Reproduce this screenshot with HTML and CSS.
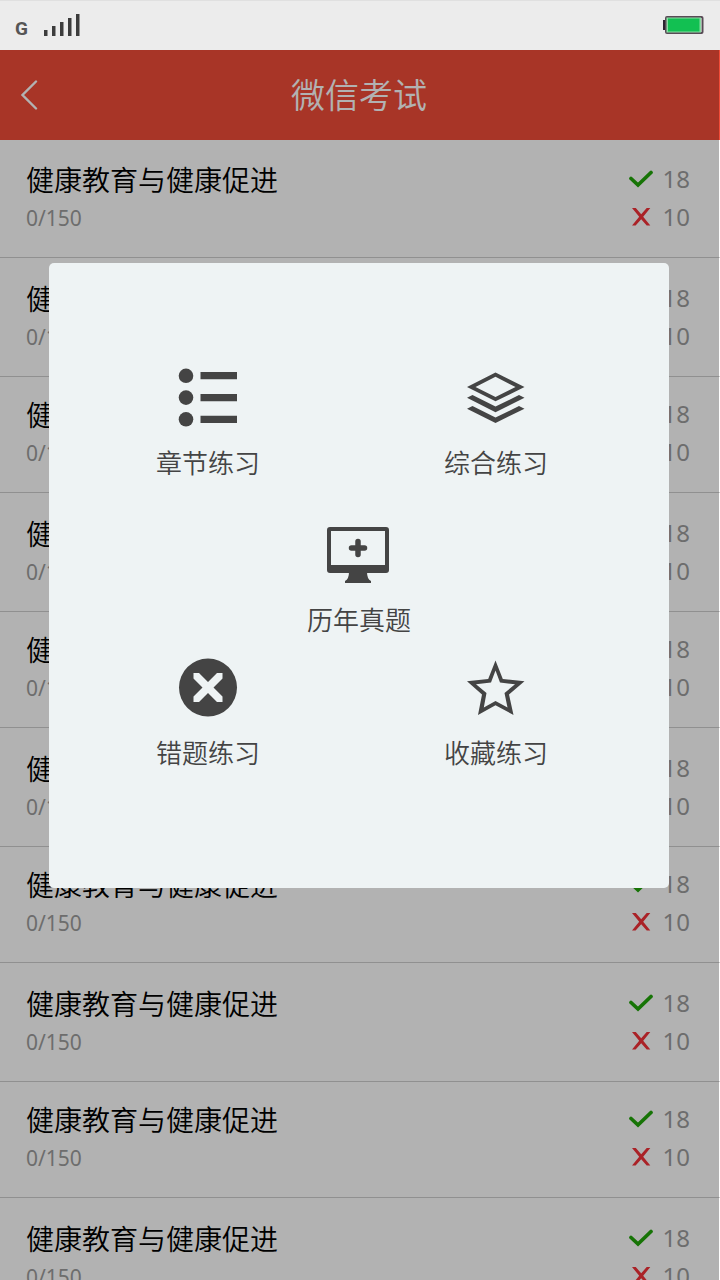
FILE: index.html
```html
<!DOCTYPE html>
<html lang="zh-CN">
<head>
<meta charset="utf-8">
<meta name="viewport" content="width=device-width, initial-scale=1">
<title>微信考试</title>
<link rel="stylesheet" href="styles.css">
</head>
<body>
<svg class="sprite" aria-hidden="true">
  <symbol id="check" viewBox="0 0 24 18"><path d="M2 8.500 9 15 22 2.500" fill="none" stroke="#21a60a" stroke-width="3.700" stroke-linecap="round" stroke-linejoin="miter"/></symbol>
  <symbol id="cross" viewBox="0 0 24 18"><path d="M3 0H6.800L12.200 6.300 17.700 0H21.300L14.200 8.800 21.300 17.500H17.700L12.200 11.200 6.600 17.500H3L10.200 8.800Z" fill="#f43138"/></symbol>
</svg>
<div class="app">
  <div class="status">
    <div class="network">
      <span class="carrier">G</span>
      <svg width="38" height="24" viewBox="0 0 38 24" aria-hidden="true"><path d="M1 17h3.500v6H1zM9 13h3.500v10H9zM17 9h3.500v14H17zM25 5h3.500v18H25zM33 1h3.500v22H33z" fill="#3c3c3c"/></svg>
    </div>
    <svg width="42" height="20" viewBox="0 0 42 20" aria-hidden="true"><path d="M0 5h3v10H0z" fill="#2c2430"/><rect x="2" y="1" width="38.500" height="18" rx="2" fill="#584a55"/><rect x="3.500" y="2.500" width="34.500" height="15" fill="#8bdca5"/><rect x="5" y="3.500" width="31.500" height="13" fill="#12c052"/><path d="M38.500 3v14" stroke="#aaa" stroke-width="1"/></svg>
  </div>
  <header class="bar">
    <button class="back" type="button" aria-label="返回"><svg width="18" height="30" viewBox="0 0 18 30"><path d="M16 1.500 2.500 15 16 28.500" fill="none" stroke="#fff" stroke-width="2.400" stroke-linecap="round"/></svg></button>
    <h1 class="heading">微信考试</h1>
  </header>
  <ul class="list">
    <li class="row"><div><h2 class="name">健康教育与健康促进</h2><p class="progress">0/150</p></div><div class="score"><p class="count"><svg class="mark"><use href="#check"/></svg>18</p><p class="count"><svg class="mark"><use href="#cross"/></svg>10</p></div></li>
    <li class="row"><div><h2 class="name">健康教育与健康促进</h2><p class="progress">0/150</p></div><div class="score"><p class="count"><svg class="mark"><use href="#check"/></svg>18</p><p class="count"><svg class="mark"><use href="#cross"/></svg>10</p></div></li>
    <li class="row"><div><h2 class="name">健康教育与健康促进</h2><p class="progress">0/150</p></div><div class="score"><p class="count"><svg class="mark"><use href="#check"/></svg>18</p><p class="count"><svg class="mark"><use href="#cross"/></svg>10</p></div></li>
    <li class="row"><div><h2 class="name">健康教育与健康促进</h2><p class="progress">0/150</p></div><div class="score"><p class="count"><svg class="mark"><use href="#check"/></svg>18</p><p class="count"><svg class="mark"><use href="#cross"/></svg>10</p></div></li>
    <li class="row"><div><h2 class="name">健康教育与健康促进</h2><p class="progress">0/150</p></div><div class="score"><p class="count"><svg class="mark"><use href="#check"/></svg>18</p><p class="count"><svg class="mark"><use href="#cross"/></svg>10</p></div></li>
    <li class="row"><div><h2 class="name">健康教育与健康促进</h2><p class="progress">0/150</p></div><div class="score"><p class="count"><svg class="mark"><use href="#check"/></svg>18</p><p class="count"><svg class="mark"><use href="#cross"/></svg>10</p></div></li>
    <li class="row"><div><h2 class="name">健康教育与健康促进</h2><p class="progress">0/150</p></div><div class="score"><p class="count"><svg class="mark"><use href="#check"/></svg>18</p><p class="count"><svg class="mark"><use href="#cross"/></svg>10</p></div></li>
    <li class="row"><div><h2 class="name">健康教育与健康促进</h2><p class="progress">0/150</p></div><div class="score"><p class="count"><svg class="mark"><use href="#check"/></svg>18</p><p class="count"><svg class="mark"><use href="#cross"/></svg>10</p></div></li>
    <li class="row"><div><h2 class="name">健康教育与健康促进</h2><p class="progress">0/150</p></div><div class="score"><p class="count"><svg class="mark"><use href="#check"/></svg>18</p><p class="count"><svg class="mark"><use href="#cross"/></svg>10</p></div></li>
    <li class="row"><div><h2 class="name">健康教育与健康促进</h2><p class="progress">0/150</p></div><div class="score"><p class="count"><svg class="mark"><use href="#check"/></svg>18</p><p class="count"><svg class="mark"><use href="#cross"/></svg>10</p></div></li>
  </ul>
</div>
<div class="overlay">
  <div class="dialog" role="dialog" aria-label="练习">
    <div class="pair">
      <button class="option" type="button">
        <svg class="icon" viewBox="0 0 60 60"><g fill="#444"><circle cx="8" cy="7.800" r="7.300"/><circle cx="8" cy="29.600" r="7.300"/><circle cx="8" cy="51.300" r="7.300"/><path d="M22.500 4H59v7.200H22.500zM22.500 26H59v7.200H22.500zM22.500 47.800H59V55H22.500z"/></g></svg>
        章节练习
      </button>
      <button class="option" type="button">
        <svg class="icon" viewBox="0 0 60 60"><g fill="#444"><path fill-rule="evenodd" d="M29.500 4.500 58.500 19 29.500 33.300 1 19ZM29.500 8.800 9.500 19 29.500 29 49.500 19Z"/><path d="M1 29.800 6.500 27 29.500 38.500 53 27 58.500 29.800 29.500 44.300ZM1 40.700 6.500 38 29.500 49.500 53 38 58.500 40.700 29.500 55Z"/></g></svg>
        综合练习
      </button>
    </div>
    <div class="middle">
      <button class="option" type="button">
        <svg class="icon" viewBox="0 0 64 60"><g fill="#444"><path fill-rule="evenodd" d="M3 2H59Q62 2 62 5V45Q62 48 59 48H3Q0 48 0 45V5Q0 2 3 2ZM4 6V40H58V6Z"/><path d="M22 47H40Q40 54 44 56V58H18V56Q22 54 22 47Z"/></g><path d="M31 16.500V29.500M24.500 23H37.500" stroke="#444" stroke-width="5.500" stroke-linecap="round"/></svg>
        历年真题
      </button>
    </div>
    <div class="pair">
      <button class="option" type="button">
        <svg class="icon" viewBox="0 0 60 60"><circle cx="30" cy="29.500" r="29" fill="#444"/><path d="M15.500 15H21L30 24 39 15H44.500V20.500L35.500 29.500 44.500 38.500V44H39L30 35 21 44H15.500V38.500L24.500 29.500 15.500 20.500Z" fill="#eef3f4"/></svg>
        错题练习
      </button>
      <button class="option" type="button">
        <svg class="icon" viewBox="0 0 60 60"><path fill="#444" fill-rule="evenodd" d="M29.500 2.500 36.800 21 58.500 23.200 43 36.500 47.500 57 29.500 47.300 12 57 16 36.500 1 23.200 22.200 21ZM29.500 12.500 25 24.500 10 26.200 20.500 35 17.800 49.500 29.500 43 41.500 49.500 38.500 35 49 26.200 34 24.500Z"/></svg>
        收藏练习
      </button>
    </div>
  </div>
</div>
</body>
</html>
```
FILE: styles.css
```css
* { box-sizing: border-box; }

body,
h1,
h2,
p,
ul {
  margin: 0;
  padding: 0;
}

body {
  background: #fff;
  font-family: "Noto Sans", "Noto Sans CJK SC", sans-serif;
}

button {
  padding: 0;
  border: 0;
  background: none;
  color: inherit;
  font: inherit;
  cursor: pointer;
}

svg { display: block; }

.sprite {
  position: absolute;
  width: 0;
  height: 0;
}

.app {
  display: flex;
  flex-direction: column;
  height: 100vh;
  overflow: hidden;
}

.status {
  display: flex;
  flex: none;
  align-items: center;
  justify-content: space-between;
  height: 50px;
  padding: 0 15px 1px;
  background: #ececec;
  box-shadow: inset 0 1px #e0e0e0;
}

.network {
  display: flex;
  align-items: center;
  gap: 15px;
}

.carrier {
  padding-top: 9px;
  color: #555;
  font: bold 19px/20px Roboto, sans-serif;
}

.bar {
  display: grid;
  flex: none;
  grid-template-columns: 60px 1fr 62px;
  align-items: center;
  height: 90px;
  background: #f14c38;
  color: #fff;
}

.back {
  display: flex;
  align-items: center;
  height: 88px;
  padding-left: 20px;
}

.heading {
  font-size: 34px;
  font-weight: 350;
  line-height: 50px;
  text-align: center;
}

.list {
  flex: 1;
  min-height: 0;
  overflow: hidden;
  list-style: none;
}

.row {
  display: flex;
  justify-content: space-between;
  height: 116px;
  padding: 18px 30px 0 26px;
  border-bottom: 1px solid #cfcfcf;
}

.row:nth-child(even) {
  height: 119px;
  padding-top: 21px;
}

.row:first-child {
  height: 118px;
  padding-top: 20px;
}

.name {
  color: #000;
  font-size: 28px;
  font-weight: 350;
  line-height: 41px;
}

.progress {
  color: #9d9d9d;
  font-size: 21px;
  line-height: 34px;
}

.count {
  display: flex;
  align-items: center;
  gap: 10px;
  color: #9d9d9d;
  font-size: 24px;
  line-height: 38px;
}

.mark {
  width: 24px;
  height: 18px;
}

.overlay {
  position: fixed;
  top: 50px;
  right: 1px;
  bottom: 0;
  left: 0;
  padding: 213px 50px 0 49px;
  background: rgba(0, 0, 0, 0.3);
}

.dialog {
  padding: 105px 0 117px;
  border-radius: 5px;
  background: #eef3f4;
  color: #444;
}

.pair {
  display: grid;
  grid-template-columns: 1fr 1fr;
  padding: 0 29px 0 15px;
}

.middle {
  display: flex;
  justify-content: center;
  padding: 44px 0 20px;
}

.option {
  display: flex;
  flex-direction: column;
  align-items: center;
  gap: 17px;
  font-size: 26px;
  font-weight: 350;
  line-height: 36px;
}

.icon {
  width: auto;
  height: 60px;
}
```
